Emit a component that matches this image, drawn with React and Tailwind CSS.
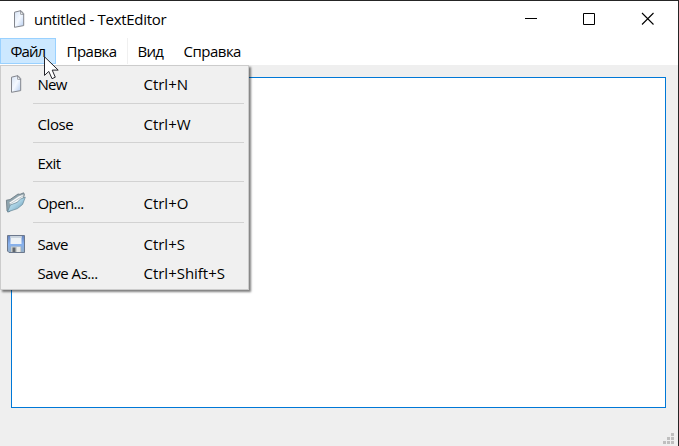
import React from 'react';

function PageIcon() {
  return (
    <svg width="12" height="18" viewBox="0 0 12 18" className="block shrink-0">
      <defs>
        <linearGradient id="page" x1="0" y1="0" x2="1" y2="1">
          <stop offset="0" stopColor="#d3e0f2" />
          <stop offset=".5" stopColor="#f5f9ff" />
          <stop offset="1" stopColor="#b5cdf0" />
        </linearGradient>
      </defs>
      <path d="M1.5 2.2 8 .6l2.7 3v12L1.5 17.3Z" fill="url(#page)" stroke="#83868d" strokeWidth="1" />
      <path d="M7.6 1v3.3l3 .2Z" fill="#fff" stroke="#777b83" strokeWidth=".7" />
    </svg>
  );
}

function FolderIcon() {
  return (
    <svg width="21" height="21" viewBox="0 0 21 21" className="block">
      <defs>
        <linearGradient id="folder" x1="0" y1="0" x2="1" y2="1">
          <stop offset="0" stopColor="#d5edf6" />
          <stop offset=".5" stopColor="#a6cfe2" />
          <stop offset="1" stopColor="#568ba8" />
        </linearGradient>
      </defs>
      <path d="M1.4 8.2 5 7.6 13 2l2 .3L18.6.8l.8 1.6-1 4L4 20l-2-1Z" fill="#8fa5af" stroke="#68757d" strokeWidth=".8" />
      <path d="m4 10.5 10-6.7 4.6-1.5-.6 5L6 14Z" fill="#f6f8f9" stroke="#8b999f" strokeWidth=".5" />
      <path d="m5 12 13.2-8.2" stroke="#a5b4bb" strokeWidth=".7" />
      <path d="m5.3 13 6.7-2.6 3.6-3.4 4.7-1.8-2.7 7.2-5.1 4.2L2.4 20Z" fill="url(#folder)" stroke="#668797" strokeWidth=".7" />
    </svg>
  );
}

function DiskIcon() {
  return (
    <svg width="18" height="18" viewBox="0 0 18 18" className="block">
      <defs>
        <linearGradient id="disk" x1="0" y1="0" x2="0" y2="1">
          <stop offset="0" stopColor="#6683bd" />
          <stop offset=".5" stopColor="#86b1ef" />
          <stop offset="1" stopColor="#96afc4" />
        </linearGradient>
      </defs>
      <path d="M.5.5h17v17H2L.5 16Z" fill="url(#disk)" stroke="#6c788c" />
      <path d="M3.5 1h11v8h-11Z" fill="#edf2f6" />
      <path d="M3.5 1h11v2h-11Z" fill="#cbd5df" />
      <path d="M4 11.5h10V17H4Z" fill="#c9cdcc" />
      <path d="M5.5 12.5h3V17h-3Z" fill="#60676e" />
      <path d="M10 12h3v5h-3Z" fill="#e9eae7" />
    </svg>
  );
}

function Item({ icon, label, shortcut, labelClass }) {
  return (
    <div className="flex h-[29px] items-center">
      <div className="flex w-[36.5px] shrink-0 items-center">{icon}</div>
      <span className={'mb-0.5 w-[106px] shrink-0 ' + labelClass}>{label}</span>
      <span className="mb-0.5 tracking-[-0.02px]">{shortcut}</span>
    </div>
  );
}

const Separator = ({ className }) => <div className={'ml-8 mr-1 h-px bg-[#d2d2d2] ' + className} />;

export default function App() {
  return (
    <div className="relative flex h-[446px] w-[679px] flex-col overflow-hidden border-r border-t border-[#252525] bg-[#efefef] font-['Open_Sans','Noto_Sans',sans-serif] text-[15px] leading-5 text-black whitespace-nowrap">
      <header className="flex h-[37px] shrink-0 items-center bg-white">
        <div className="mb-px ml-[13px]"><PageIcon /></div>
        <span className="mb-0.5 ml-[9px] tracking-[-0.3px]">untitled - TextEditor</span>
        <svg className="mb-[3px] ml-auto mr-6" width="130" height="14" viewBox="0 0 130 14" fill="none" stroke="#000">
          <path d="M1 7.5h12" />
          <path d="M59.5 2.5h11v11h-11Z" />
          <path d="m118 2 11.5 11.5m0-11.5L118 13.5" strokeWidth="1.1" />
        </svg>
      </header>
      <nav className="flex h-[27px] shrink-0 items-start bg-white">
        <div className="flex h-[26px] w-14 items-center border border-[#99d1ff] bg-[#cce8ff] pl-[9.5px] tracking-[-0.9px]">Файл</div>
        <div className="flex h-[26px] w-[72px] items-center border-r border-[#f0f0f0] pl-[10.5px] tracking-[-0.5px]">Правка</div>
        <div className="flex h-[26px] w-[55.5px] items-center pl-[9.5px] tracking-[-0.8px]">Вид</div>
        <div className="flex h-[26px] items-center tracking-[-0.5px]">Справка</div>
      </nav>
      <main className="ml-[11px] mt-3 h-[331px] w-[655px] border border-[#0078d7] bg-white" />
      <svg className="ml-auto mr-1 mt-[25px] shrink-0" width="11" height="11" fill="#bfbfbf">
        <path d="M8 0h3v3H8ZM4 4h3v3H4ZM8 4h3v3H8ZM0 8h3v3H0ZM4 8h3v3H4ZM8 8h3v3H8Z" />
      </svg>

      <div className="absolute left-0 top-16 h-[225px] w-[249px] border border-[#cccccc] bg-[#f0f0f0] pt-1 shadow-[2px_2px_2px_rgba(0,0,0,0.5)]">
        <Item icon={<div className="mb-px ml-[9px]"><PageIcon /></div>} label="New" shortcut="Ctrl+N" labelClass="tracking-[-0.7px]" />
        <Separator className="mt-1" />
        <div className="mt-1.5"><Item label="Close" shortcut="Ctrl+W" labelClass="tracking-[-0.4px]" /></div>
        <Separator className="mt-[3px]" />
        <div className="mt-1.5"><Item label="Exit" labelClass="tracking-[-0.6px]" /></div>
        <Separator className="mt-[3px]" />
        <div className="mt-[7px]"><Item icon={<div className="mb-0.5 ml-1"><FolderIcon /></div>} label="Open..." shortcut="Ctrl+O" labelClass="tracking-[-0.6px]" /></div>
        <Separator className="mt-1" />
        <div className="mt-[7px]"><Item icon={<div className="mb-px ml-1.5"><DiskIcon /></div>} label="Save" shortcut="Ctrl+S" labelClass="tracking-[-0.55px]" /></div>
        <Item label="Save As..." shortcut="Ctrl+Shift+S" labelClass="tracking-[-0.45px]" />
      </div>

      <svg className="absolute left-[44px] top-[55px]" width="16" height="25" viewBox="0 0 16 25">
        <path d="M.5.8v18.6l4.3-4 3.2 7.3 3.3-1.5-3.1-7.1h6Z" fill="#fff" stroke="#24242b" strokeWidth="1" />
      </svg>
    </div>
  );
}
